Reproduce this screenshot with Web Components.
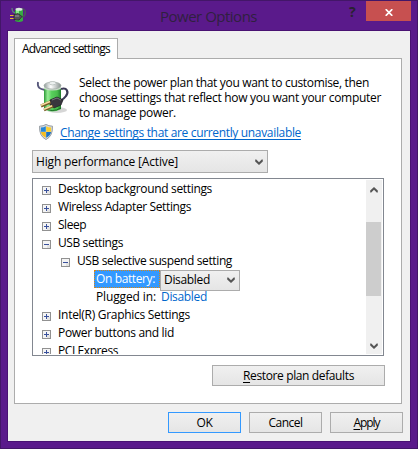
<!DOCTYPE html>
<html lang="en-GB"><head><meta charset="utf-8"><title>Power Options</title>
<style>
html,body{margin:0;width:418px;height:449px;overflow:hidden}
body{font:12px/18px "Open Sans","Noto Sans",sans-serif;color:#000}
</style></head><body>
<power-dialog></power-dialog>
<script>
const define=(name,html,init)=>customElements.define(name,class extends HTMLElement{
  connectedCallback(){
    if(this.shadowRoot)return;
    const t=document.createElement('template');
    t.innerHTML=html;
    this.attachShadow({mode:'open'}).append(t.content.cloneNode(true));
    if(init)init(this,this.shadowRoot);
  }
});

/* Text run that is tracked to a given width */
define('fit-text',`<style>:host{display:inline-block;white-space:pre}span{display:inline-block}</style><span><slot></slot></span>`,(el,root)=>{
  const w=+el.getAttribute('w'),s=root.querySelector('span');
  const n=el.textContent.length;
  s.style.letterSpacing=(w-s.getBoundingClientRect().width)/n+'px';
  el.style.width=w+'px';
});

define('chevron-icon',`<style>:host{display:block;width:8px;height:6px}:host([up]) svg{transform:scaleY(-1)}svg{display:block}</style>
<svg width="8" height="6" viewBox="0 0 8 6"><path d="M.2.5v2L4 6l3.8-3.5v-2L6.700 .5 4 3.200 1.300 .5z" fill="#555"/></svg>`);

define('drop-down',`<style>:host{display:flex;box-sizing:border-box;align-items:center;justify-content:space-between;border:1px solid #acacac;background:linear-gradient(#f0f0f0,#e5e5e5);padding:0 4px 0 3px}</style><slot></slot><chevron-icon></chevron-icon>`);

define('push-button',`<style>:host{display:flex;box-sizing:border-box;width:73px;height:21px;align-items:center;justify-content:center;border:1px solid #acacac;background:linear-gradient(#f0f0f0,#e5e5e5)}:host([default]){border-color:#3399ff}</style><slot></slot>`);

define('tree-row',`<style>:host{display:flex;height:18px;align-items:center;flex:none;padding-left:9px}:host([level="2"]){padding-left:28px}:host([level="3"]){padding-left:63px}
svg{display:block;margin:3px 7px 0 0}:host([level="3"]) svg{display:none}:host(:not([open])) .v{display:block}.v{display:none}</style>
<svg width="9" height="9" viewBox="0 0 9 9" shape-rendering="crispEdges"><rect width="9" height="9" rx="1" fill="#919191"/><path d="M1 1h7v7H1z" fill="#f4f4f4"/><path d="M5 5h3v3H5z" fill="#e2e2e2"/><path d="M2 4h5v1H2z" fill="#3a519c"/><path class="v" d="M4 2h1v5H4z" fill="#3a519c"/></svg><slot></slot>`);

define('scroll-bar',`<style>:host{display:flex;flex-direction:column;align-items:flex-start;width:16px;height:174px;background:#f0f0f0}
.thumb{width:15px;height:74px;background:#cdcdcd;margin-top:29px}chevron-icon{margin:7px 0 0 3.500px}.down{margin-top:47px}</style>
<chevron-icon up></chevron-icon><div class="thumb"></div><chevron-icon class="down"></chevron-icon>`);

define('plug-icon',`<style>:host{display:block}svg{display:block}</style>
<svg width="16" height="16" viewBox="0 0 16 16"><path d="M2 1q0 5 4 5" fill="none" stroke="#5d7f78" stroke-width="1.300"/><path d="M5 3q4-2 8 0v11q-4 2-8 0z" fill="#36aa43"/><path d="M6 3h3v10H6z" fill="#8be58c"/><path d="M12 2c5 0 4 7 0 8" fill="none" stroke="#4b545c" stroke-width="1.500"/><ellipse cx="9" cy="2.200" rx="3.500" ry="1.500" fill="#dce9df"/><path d="M0 8.500h4M0 11.500h4" stroke="#e8b92e" stroke-width="1.200"/><path d="M4 7.500l4-1 4 3-3 3.500-5-.5z" fill="#55535a" stroke="#242027" stroke-width=".7"/><path d="M5 9h4" stroke="#aaa" stroke-width=".8"/></svg>`);

define('battery-icon',`<style>:host{display:block}svg{display:block}</style>
<svg width="34" height="34" viewBox="0 0 34 34"><defs><linearGradient id="g"><stop stop-color="#2c9a37"/><stop offset=".22" stop-color="#96ec94"/><stop offset=".45" stop-color="#58cf5c"/><stop offset=".78" stop-color="#49bd4c"/><stop offset="1" stop-color="#1f7b2b"/></linearGradient><linearGradient id="m"><stop stop-color="#8f9a98"/><stop offset=".4" stop-color="#fff"/><stop offset="1" stop-color="#88928f"/></linearGradient></defs>
<ellipse cx="21" cy="30" rx="10" ry="3" fill="#bbb" opacity=".6"/>
<path d="M2 2C1 8 4 9 9 10" fill="none" stroke="#56577a" stroke-width="1.800"/>
<path d="M8 6v23q8 5 17 0V6z" fill="url(#g)"/>
<path d="M8 6v3q8 3 17 0V6z" fill="#c6d8c7"/>
<ellipse cx="16.500" cy="5.500" rx="8.500" ry="3.500" fill="url(#m)" stroke="#9ba4a0" stroke-width=".6"/>
<ellipse cx="16.500" cy="3.200" rx="3.500" ry="1.700" fill="#edf1f0" stroke="#9ba4a0" stroke-width=".5"/>
<path d="M8 28q8 5 17 0" fill="none" stroke="#1b6b26"/>
<path d="M25 9c6-2 8 3 5 7-2 3-4 4-6 5" fill="none" stroke="#3b3b55" stroke-width="2.200"/>
<path d="M14 20l7-3 6 3-2 5-7 3-4-3z" fill="#38363d" stroke="#1e1d23" stroke-width=".7"/><path d="M16 20l5-2 4 2" fill="none" stroke="#77757e"/>
<path d="M14.500 22L5 26M17 26l-9 4" stroke="#7a5b25" stroke-width="3"/><path d="M14 21.500L5 25.300M16 25.700l-8 3.600" stroke="#f5dda0" stroke-width="1.500"/></svg>`);

define('shield-icon',`<style>:host{display:block}svg{display:block}</style>
<svg width="14" height="16" viewBox="0 0 14 16"><path d="M7 .4Q9.500 2 13.500 2.200 14 12 7 15.600 0 12 .5 2.200 4.500 2 7 .4z" fill="#d5d9dc" stroke="#858d94" stroke-width=".8"/><path d="M6.800 2.200v5.500H1.900V3.600Q5 3.500 6.800 2.200z" fill="#2487d6"/><path d="M7.200 2.200v5.500h4.900V3.600Q9 3.500 7.200 2.200z" fill="#fbce2c"/><path d="M1.900 8.100h4.900v5.700Q2.500 11.500 1.900 8.100z" fill="#f5bd20"/><path d="M12.100 8.100H7.200v5.700q4.300-2.300 4.900-5.700z" fill="#1c73c4"/></svg>`);

define('title-bar',`<style>:host{display:grid;grid-template-columns:150px 1fr 20px 45px;height:29px;padding:0 6px 0 9px;align-items:start}
plug-icon{margin-top:6px}.t{font-size:15px;line-height:20px;color:#30203f;margin-top:5px}.q{font:bold 14px/20px "Open Sans";color:#292231;margin-top:1px;margin-left:3px}.x{height:20px;background:#c75050;display:grid;place-items:center}</style>
<plug-icon></plug-icon><fit-text class="t" w="97">Power Options</fit-text><span class="q">?</span><div class="x"><svg width="8" height="7" viewBox="0 0 8 7" style="margin:2px 0 0 1px"><path d="M.7.200 7.300 6.800M7.300.200.7 6.800" stroke="#fff" stroke-width="1.700"/></svg></div>`);

define('settings-tree',`<style>:host{display:flex;box-sizing:border-box;width:352px;height:178px;border:1px solid #828790;padding:1px;justify-content:space-between;background:#fff}
.rows{display:flex;flex-direction:column;height:174px;overflow:hidden;flex:1;margin-left:-1px}.pick{box-sizing:border-box;height:18px;width:66px;background:#39f;color:#fff;outline:1px dotted #d98512;outline-offset:-1px;padding-left:2px;margin-left:-2px;line-height:17px}
drop-down{width:80px;height:21px;margin:1px 0 -1px;position:relative}.blue{color:#0066cc;margin-left:5px}</style>
<div class="rows">
<tree-row><fit-text w="154">Desktop background settings</fit-text></tree-row>
<tree-row><fit-text w="133">Wireless Adapter Settings</fit-text></tree-row>
<tree-row><fit-text w="28">Sleep</fit-text></tree-row>
<tree-row open><fit-text w="65">USB settings</fit-text></tree-row>
<tree-row level="2" open><fit-text w="155">USB selective suspend setting</fit-text></tree-row>
<tree-row level="3"><div class="pick"><fit-text w="59">On battery:</fit-text></div><drop-down><fit-text w="46">Disabled</fit-text></drop-down></tree-row>
<tree-row level="3"><fit-text w="60">Plugged in:</fit-text><fit-text class="blue" w="46">Disabled</fit-text></tree-row>
<tree-row><fit-text w="132">Intel(R) Graphics Settings</fit-text></tree-row>
<tree-row><fit-text w="116">Power buttons and lid</fit-text></tree-row>
<tree-row><fit-text w="60">PCI Express</fit-text></tree-row>
</div><scroll-bar></scroll-bar>`);

define('tab-panel',`<style>:host{display:flex;flex-direction:column;width:388px;height:366px}
.tab{box-sizing:border-box;width:104px;height:21px;border:1px solid #acacac;border-bottom:0;background:#fff;padding-left:7px;line-height:19px;z-index:1;margin-bottom:-1px}
.page{box-sizing:border-box;height:346px;border:1px solid #acacac;background:#fff;padding:16px 17px 0}</style>
<div class="tab"><fit-text w="88">Advanced settings</fit-text></div><div class="page"><slot></slot></div>`);

define('power-dialog',`<style>:host{display:block;box-sizing:border-box;width:418px;height:449px;background:#5a1a8b;border:1px solid #431668}
.client{box-sizing:border-box;width:404px;height:412px;margin-left:6px;border:1px solid #491273;background:#f0f0f0;padding:7px 6px 0}
.intro{display:flex;gap:9px;height:49px;padding-left:4px}.copy{display:flex;flex-direction:column;line-height:15px}battery-icon{margin-top:5px}
.link{display:flex;height:16px;padding-left:7px;gap:7px;align-items:flex-start;line-height:17px;color:#0066cc}.link div{height:15px;border-bottom:1px solid #0066cc}.link fit-text{vertical-align:top}
.plan{width:236px;height:23px;margin:10px 0 5px}.restore{width:173px;margin:9px 0 0 180px}.buttons{display:flex;gap:8px;padding:8px 0 0 154px}u{text-underline-offset:2px;text-decoration-thickness:1px}</style>
<title-bar></title-bar><div class="client"><tab-panel>
<div class="intro"><battery-icon></battery-icon><div class="copy"><fit-text w="290">Select the power plan that you want to customise, then</fit-text><fit-text w="302">choose settings that reflect how you want your computer</fit-text><fit-text w="97">to manage power.</fit-text></div></div>
<div class="link"><shield-icon></shield-icon><div><fit-text w="241">Change settings that are currently unavailable</fit-text></div></div>
<drop-down class="plan"><fit-text w="142">High performance [Active]</fit-text></drop-down>
<settings-tree></settings-tree>
<push-button class="restore"><fit-text w="111"><u>R</u>estore plan defaults</fit-text></push-button>
</tab-panel><div class="buttons"><push-button default><fit-text w="16">OK</fit-text></push-button><push-button><fit-text w="34">Cancel</fit-text></push-button><push-button><fit-text w="26"><u>A</u>pply</fit-text></push-button></div></div>`);
</script></body></html>
